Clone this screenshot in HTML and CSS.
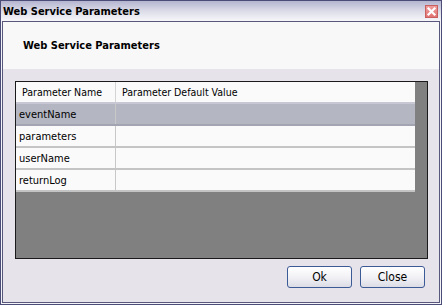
FILE: index.html
```html
<!DOCTYPE html>
<html lang="en">
<head>
    <meta charset="UTF-8">
    <title>Web Service Parameters</title>
    <link rel="stylesheet" href="styles.css">
</head>
<body>
    <div class="window">
        <div class="titlebar">
            <span class="title">Web Service Parameters</span>
            <span class="close-box">
                <svg width="13" height="13" viewBox="0 0 13 13">
                    <path d="M3.5 3.5 L9.5 9.5 M9.5 3.5 L3.5 9.5" stroke="#fff" stroke-width="2.2" stroke-linecap="square"/>
                </svg>
            </span>
        </div>
        <div class="frame">
            <div class="header-panel">
                <h2>Web Service Parameters</h2>
            </div>
            <div class="body-panel">
                <div class="grid-box">
                    <table class="grid">
                        <thead>
                            <tr>
                                <th class="col-name">Parameter Name</th>
                                <th>Parameter Default Value</th>
                            </tr>
                        </thead>
                        <tbody>
                            <tr class="selected"><td>eventName</td><td></td></tr>
                            <tr><td>parameters</td><td></td></tr>
                            <tr><td>userName</td><td></td></tr>
                            <tr><td>returnLog</td><td></td></tr>
                        </tbody>
                    </table>
                </div>
                <div class="buttons">
                    <button type="button">Ok</button>
                    <button type="button">Close</button>
                </div>
            </div>
        </div>
    </div>
</body>
</html>
```

FILE: styles.css
```css
body {
    margin: 0;
    font-family: 'DejaVu Sans Condensed', 'Liberation Sans', sans-serif;
    font-size: 11px;
    color: #000;
    background: #fff;
}

.window {
    width: 442px;
    height: 305px;
    box-sizing: border-box;
    border: 1px solid #4c4c78;
    background: #f4f4f8;
    display: flex;
    flex-direction: column;
}

.titlebar {
    height: 20px;
    display: flex;
    align-items: center;
    justify-content: space-between;
    padding: 0 3px 0 2px;
    background: linear-gradient(to bottom, #b4b4d0 0%, #dcdce8 50%, #f6f6fa 100%);
}

.title {
    font-weight: bold;
    font-size: 11px;
}

.close-box {
    width: 13px;
    height: 13px;
    background: linear-gradient(to bottom, #f09a9a, #e27474);
    border: 1px solid #c86060;
    box-sizing: border-box;
    display: flex;
}

.close-box svg {
    margin: -1px;
}

.frame {
    flex: 1;
    margin: 0 1px 1px 1px;
    border: 1px solid #58587c;
    display: flex;
    flex-direction: column;
}

.header-panel {
    height: 47px;
    background: #f8f8f8;
    display: flex;
    align-items: center;
    padding-left: 20px;
}

.header-panel h2 {
    margin: 0;
    font-size: 11px;
    font-weight: bold;
}

.body-panel {
    flex: 1;
    background: #e6e4ea;
    padding: 12px 11px 0 12px;
    display: flex;
    flex-direction: column;
}

.grid-box {
    height: 176px;
    border: 1px solid #1a1a1a;
    background: #808080;
}

.grid {
    width: 399px;
    border-collapse: collapse;
    table-layout: fixed;
    font-size: 10.5px;
    white-space: nowrap;
}

.grid th {
    height: 20px;
    background: #fafafa;
    text-align: left;
    font-weight: normal;
    padding: 0 0 0 6px;
    border-bottom: 2px solid #c8c8d4;
}

.grid th.col-name {
    width: 93px;
    border-right: 1px solid #d4d4d4;
}

.grid td {
    height: 20px;
    background: #fafafa;
    padding: 0 0 0 3px;
    border-bottom: 2px solid #c4c4c4;
    font-size: 11px;
}

.grid td:first-child {
    border-right: 1px solid #c8c8c8;
}

.grid tr.selected td {
    background: #b4b6c2;
    border-bottom-color: #a2a4b2;
}

.buttons {
    display: flex;
    justify-content: flex-end;
    gap: 8px;
    margin: 7px 3px 0 0;
}

.buttons button {
    width: 65px;
    height: 22px;
    font-family: 'DejaVu Sans Condensed', 'Liberation Sans', sans-serif;
    font-size: 12px;
    color: #000;
    border: 1px solid #3c5a96;
    border-radius: 3px;
    background: linear-gradient(to bottom, #ffffff 0%, #f2f2f6 50%, #dcdce6 100%);
    padding: 0;
}
```
